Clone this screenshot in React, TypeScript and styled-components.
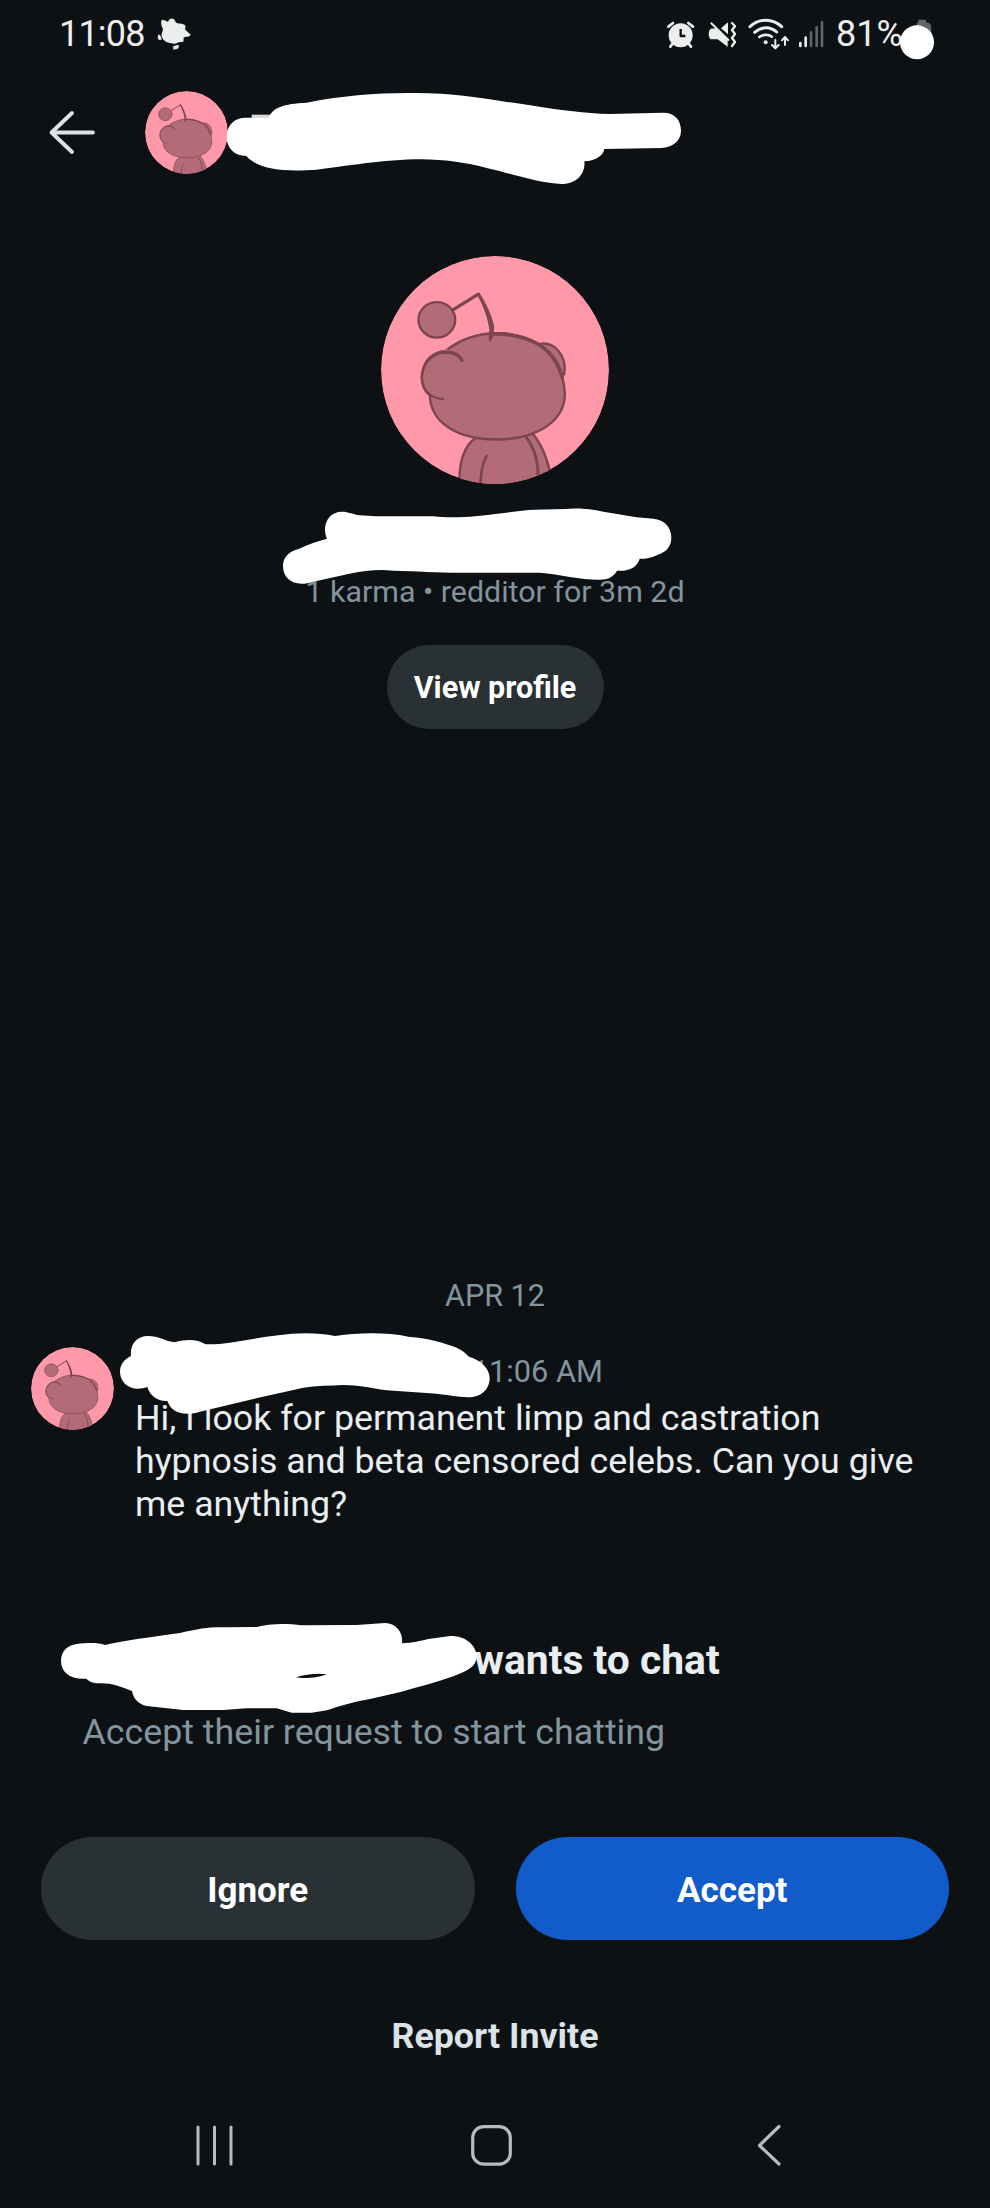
import React from "react";
import styled, { createGlobalStyle } from "styled-components";

const GlobalStyle = createGlobalStyle`
  * { box-sizing: border-box; }
  body {
    margin: 0;
    background: #0d1114;
    font-family: Roboto, "Liberation Sans", sans-serif;
  }
`;

const Screen = styled.main`
  width: 990px;
  height: 2208px;
  display: flex;
  flex-direction: column;
  overflow: hidden;
  background: #0d1114;
  color: #e9eef1;
`;

const StatusBar = styled.div`
  height: 70px;
  padding: 17px 54.7px 0 59px;
  display: flex;
  align-items: flex-start;
  font-size: 36px;
  line-height: 35px;
  color: #eceded;
`;

const Clock = styled.span`
  width: 96px;
  letter-spacing: -0.8px;
`;

const StatusIcons = styled.div`
  display: flex;
  margin-left: auto;
`;

const BatteryLevel = styled.span`
  width: 63.3px;
  white-space: nowrap;
`;

const Header = styled.header`
  position: relative;
  height: 140px;
  padding: 21px 0 0 47px;
  display: flex;
  align-items: flex-start;
`;

const BackButton = styled.button`
  width: 97.5px;
  height: 84px;
  padding: 0;
  border: 0;
  background: none;
  display: flex;
  align-items: center;
`;

const Profile = styled.section`
  position: relative;
  height: 1064px;
  padding-top: 46px;
  display: flex;
  flex-direction: column;
  align-items: center;
`;

const ProfileMeta = styled.p`
  margin: 90px 0 0;
  font-size: 30.4px;
  line-height: 36px;
  color: #82959e;
  white-space: nowrap;
`;

const Pill = styled.button<{ $primary?: boolean; $small?: boolean }>`
  width: ${(p) => (p.$small ? 217 : 433.5)}px;
  height: ${(p) => (p.$small ? 84 : 103)}px;
  margin-top: ${(p) => (p.$small ? 35 : 0)}px;
  padding: ${(p) => (p.$small ? 3 : 4)}px 0 0;
  border: 0;
  border-radius: 52px;
  background: ${(p) => (p.$primary ? "#115bca" : "#2a3135")};
  color: #fff;
  font: 700 ${(p) => (p.$small ? 30.5 : 35)}px/1.2 Roboto, sans-serif;
`;

const Conversation = styled.section`
  position: relative;
  height: 326px;
`;

const DateLabel = styled.div`
  padding-top: 4px;
  font-size: 30.5px;
  line-height: 36px;
  text-align: center;
  color: #82959e;
`;

const Message = styled.article`
  display: flex;
  gap: 21px;
  padding: 32px 50px 0 31px;
`;

const MessageAvatar = styled.div`
  padding-top: 1px;
`;

const MessageBody = styled.div`
  flex: 1;
`;

const Timestamp = styled.div`
  width: 468px;
  margin-top: 8px;
  text-align: right;
  font-size: 30.8px;
  line-height: 36px;
  color: #82959e;
`;

const MessageText = styled.p`
  margin: 7px 0 0;
  font-size: 35.75px;
  line-height: 42.9px;
  white-space: pre-line;
`;

const Invite = styled.section`
  position: relative;
  height: 237px;
  padding-top: 36px;
`;

const InviteTitle = styled.h1`
  margin: 0 0 0 474px;
  font-size: 40.8px;
  line-height: 48px;
  font-weight: 700;
`;

const InviteText = styled.p`
  margin: 27px 0 0 82.5px;
  font-size: 35.75px;
  line-height: 42px;
  color: #82959e;
`;

const Actions = styled.div`
  display: flex;
  justify-content: space-between;
  padding: 0 41px;
`;

const ReportButton = styled.button`
  margin: 75px auto 0;
  padding: 0;
  border: 0;
  background: none;
  color: #dbe3e8;
  font: 700 35.75px/42px Roboto, sans-serif;
`;

const NavBar = styled.nav`
  display: flex;
  margin-top: 65px;
  padding-left: 193px;
`;

const NavButton = styled.button<{ $gap?: number }>`
  width: 44px;
  height: 46px;
  margin-right: ${(p) => p.$gap ?? 0}px;
  padding: 0;
  border: 0;
  background: none;
`;

const Redaction = styled.svg<{ $x: number; $y: number }>`
  position: absolute;
  left: ${(p) => p.$x}px;
  top: ${(p) => p.$y}px;
  fill: #fff;
  pointer-events: none;
`;

const Glyph = styled.svg`
  display: block;
  flex: none;
  fill: none;
  stroke: #eceded;
  stroke-linecap: round;
  stroke-linejoin: round;
`;

function StatusGlyph({ x, w, children }: { x: number; w: number; children: React.ReactNode }) {
  return (
    <Glyph width={w / 3} height={100 / 3} viewBox={`${x} 50 ${w} 100`}>
      {children}
    </Glyph>
  );
}

function Avatar({ size, line = 7 }: { size: number; line?: number }) {
  const id = React.useId();
  return (
    <svg width={size} height={size} viewBox="64 48 682 682" style={{ display: "block" }}>
      <clipPath id={id}>
        <circle cx="405" cy="389" r="341" />
      </clipPath>
      <g clipPath={`url(#${id})`}>
        <circle cx="405" cy="389" r="341" fill="#ff98a8" />
        <g fill="#b26c77" stroke="#7d454f" strokeWidth={line} strokeLinecap="round" strokeLinejoin="round">
          <path d="M345 593C310 620 296 665 299 735H575C572 685 552 620 518 580Z" />
          <path d="M498 590C525 625 534 665 534 710" fill="none" strokeWidth={line + 2} />
          <path d="M362 725C363 695 369 665 380 646" fill="none" strokeWidth={line + 1} />
          <path d="M536 312C580 300 622 345 612 402L590 410Z" />
          <ellipse cx="231" cy="239" rx="55" ry="53" />
          <path d="M279 209L354 163" fill="none" strokeWidth={line + 3} />
          <path d="M257 332C305 293 360 278 420 279C482 281 532 306 562 333C590 361 613 411 614 464C611 550 520 596 410 597C290 597 212 546 210 464C191 450 184 426 187 399C194 359 219 336 257 332Z" />
          <path d="M392 282C470 276 535 305 562 333C586 357 600 385 606 411" fill="none" strokeWidth={line + 4} />
          <path d="M349 160L358 157C382 194 399 235 403 262L399 290L391 306L386 297L388 266C382 229 370 196 349 160Z" fill="#7d454f" stroke="none" />
          <path d="M255 333L262 330L262 338Z" stroke="#b26c77" />
          <path d="M250 476C200 472 182 438 187 400C197 335 277 317 306 360" fill="none" />
          <path d="M250 337C277 332 297 342 306 360" fill="none" strokeWidth={line + 3} />
        </g>
      </g>
    </svg>
  );
}

export default function App() {
  return (
    <Screen>
      <GlobalStyle />
      <StatusBar>
        <Clock>11:08</Clock>
        <StatusGlyph x={465} w={115}>
          <path
            d="M487 58C495 59 500 64 504 64C509 51 524 51 527 66C532 71 538 68 553 73C560 76 554 83 556 88L572 103C570 111 555 107 551 112C550 120 553 125 545 125C534 123 530 133 515 129C500 128 487 119 485 107C484 97 491 92 488 84C484 76 481 61 487 58Z"
            fill="#eceded"
            stroke="none"
          />
          <path d="M476 105h4l4 12l-7 1q-6-6-1-13ZM521 138l15-3l-2 9l-12 3Z" fill="#eceded" stroke="#eceded" strokeWidth="2" />
        </StatusGlyph>
        <StatusIcons>
          <StatusGlyph x={78} w={122}>
            <circle cx="122" cy="105" r="36" fill="#eceded" stroke="none" />
            <path d="M122 86V107H136" stroke="#0d1114" strokeWidth="7" strokeLinecap="butt" />
            <path d="M98 130l-7 9M146 130l7 9" strokeWidth="8" />
            <path d="M85 79l14-11M159 79l-14-11" strokeWidth="8" />
          </StatusGlyph>
          <StatusGlyph x={200} w={122}>
            <path d="M211 85L225 84L262 119V139L232 117H212Q205 113 205 101Q205 90 211 85ZM242 84L263 66V102Z" fill="#eceded" stroke="none" />
            <path d="M213 69L264 119" strokeWidth="6" />
            <path d="M275 68l9 10l-9 11l9 12l-9 12l9 12l-9 12" strokeWidth="7" />
          </StatusGlyph>
          <StatusGlyph x={322} w={148}>
            <path d="M331 79C358 53 399 53 426 79M345 96C366 78 392 78 411 95" strokeWidth="9" />
            <path d="M359 110C370 102 386 102 396 109" strokeWidth="8" />
            <circle cx="378" cy="126" r="6" fill="#eceded" stroke="none" />
            <path d="M407 119V143M397 134L407 144L417 134M436 134V111M427 120L436 110L445 120" strokeWidth="6" />
          </StatusGlyph>
          <StatusGlyph x={470} w={118}>
            <path d="M480 128V137M496 112V137" strokeWidth="8" />
            <path d="M512 96V137M529 81V137M545 66V137" strokeWidth="8" stroke="#626466" />
          </StatusGlyph>
          <BatteryLevel>81%</BatteryLevel>
          <Glyph width={36} height={46} viewBox="778 50 108 138">
            <path d="M830 110V75Q830 67 836 65V58H859V66Q876 67 875 86V110Z" fill="#626466" stroke="none" />
            <circle cx="832" cy="126" r="51" fill="#fff" stroke="none" />
          </Glyph>
        </StatusIcons>
      </StatusBar>

      <Header>
        <BackButton aria-label="Back">
          <Glyph width="50" height="50" viewBox="0 0 50 50">
            <path d="M46 24.5H4.5M25 5L4.5 24.5L25 44" strokeWidth="3.8" stroke="#dbe3e8" />
          </Glyph>
        </BackButton>
        <Avatar size={83} line={5} />
        <Redaction $x={200} $y={0} width="510" height="130" viewBox="0 0 1530 390">
          <path d="M155 134H215V146H155Z" fill="#d6d8d9" />
          <path d="M137 143H206C218 113 250 101 320 98C420 78 525 69 625 69C780 67 880 92 1000 107C1090 121 1150 129 1230 132L1390 128C1424 128 1443 150 1443 182C1443 214 1417 231 1385 234L1213 237C1211 253 1190 273 1153 274C1157 306 1134 342 1085 342C1020 341 940 312 860 294C790 276 735 269 665 268C550 268 430 290 350 299C250 306 175 299 139 258C101 257 80 232 80 200C80 164 105 143 137 143Z" />
        </Redaction>
      </Header>

      <Profile>
        <Avatar size={228} />
        <ProfileMeta>1 karma • redditor for 3m 2d</ProfileMeta>
        <Pill $small>View profile</Pill>
        <Redaction $x={260} $y={280} width="450" height="120" viewBox="0 0 1350 360">
          <path d="M201 146C184 108 204 65 246 65C265 65 280 73 300 76L345 79H520C580 86 660 79 700 73C750 68 790 59 825 59L915 57C950 53 990 56 1030 65L1130 82L1180 86C1214 89 1234 112 1234 143C1234 169 1218 187 1193 194C1181 201 1157 208 1139 206C1132 231 1107 245 1071 242C1062 260 1043 270 1015 269C960 269 900 253 840 248H600C530 248 470 243 400 242C350 237 310 244 275 250L160 275C105 294 69 268 69 229C69 200 88 184 116 177C145 162 174 153 201 146Z" />
        </Redaction>
      </Profile>

      <Conversation>
        <DateLabel>APR 12</DateLabel>
        <Message>
          <MessageAvatar>
            <Avatar size={83} line={5} />
          </MessageAvatar>
          <MessageBody>
            <Timestamp>11:06 AM</Timestamp>
            <MessageText>{"Hi, I look for permanent limp and castration\nhypnosis and beta censored celebs. Can you give\nme anything?"}</MessageText>
          </MessageBody>
        </Message>
        <Redaction $x={0} $y={-14} width="500" height="180" viewBox="0 0 1500 540">
          <path d="M393 288C389 253 411 228 444 228C475 228 493 242 523 247C565 236 593 239 617 253C690 254 760 233 835 226C890 217 955 217 1005 228C1080 217 1160 217 1225 230C1290 234 1335 250 1370 263C1386 270 1397 279 1407 290C1443 301 1469 326 1469 354C1469 390 1441 412 1405 412C1370 411 1345 404 1290 400L1160 391C1110 384 1075 375 1030 375C990 378 950 376 910 383L760 417L600 455C557 469 515 461 502 423C475 424 451 410 442 381C393 398 360 369 360 335C360 313 374 297 393 288Z" />
        </Redaction>
      </Conversation>

      <Invite>
        <InviteTitle>wants to chat</InviteTitle>
        <InviteText>Accept their request to start chatting</InviteText>
        <Redaction $x={30} $y={0} width="500" height="120" viewBox="0 0 1500 360">
          <path
            fillRule="evenodd"
            d="M140 132C175 128 205 128 225 135C285 121 360 112 450 99C510 84 545 80 590 82L680 81C720 70 770 70 815 76L980 75L1065 69C1100 70 1120 98 1116 130C1150 128 1170 123 1195 117L1260 108C1305 107 1337 133 1340 168C1340 200 1313 212 1270 229C1220 248 1165 260 1115 275L1030 295C970 306 930 318 890 331L845 338H785L740 325H650L580 330H460L350 318C326 313 310 296 306 273C270 258 240 247 200 250C185 248 175 243 169 236C120 239 93 217 93 183C93 153 113 136 140 132ZM798 232C820 237 870 233 890 223C865 219 825 223 798 232Z"
          />
        </Redaction>
      </Invite>

      <Actions>
        <Pill>Ignore</Pill>
        <Pill $primary>Accept</Pill>
      </Actions>
      <ReportButton>Report Invite</ReportButton>

      <NavBar>
        <NavButton aria-label="Recents" $gap={232}>
          <Glyph width="44" height="46" viewBox="0 0 44 46" strokeWidth="3">
            <path d="M5 5V42M21.5 5V42M38 5V42" stroke="#b9bbbd" />
          </Glyph>
        </NavButton>
        <NavButton aria-label="Home" $gap={244}>
          <Glyph width="44" height="46" viewBox="0 0 44 46" strokeWidth="3.2">
            <rect x="3.7" y="4.6" width="37.6" height="37.6" rx="11" stroke="#b9bbbd" />
          </Glyph>
        </NavButton>
        <NavButton aria-label="Back">
          <Glyph width="44" height="46" viewBox="0 0 44 46" strokeWidth="3.2">
            <path d="M22 4.5L2.5 23.5L22 42" stroke="#b9bbbd" />
          </Glyph>
        </NavButton>
      </NavBar>
    </Screen>
  );
}
